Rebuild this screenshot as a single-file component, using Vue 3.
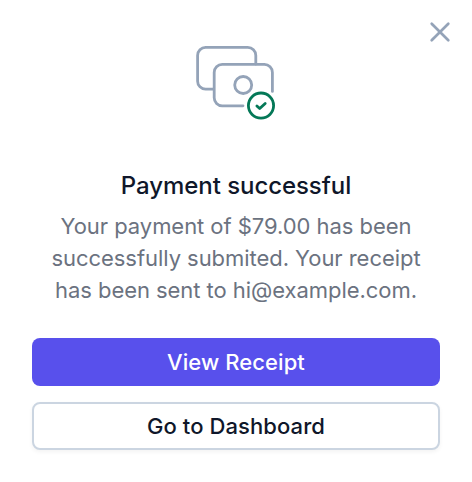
<script setup>
const lines = [
  'Your payment of $79.00 has been',
  'successfully submited. Your receipt',
  'has been sent to hi@example.com.',
]
</script>

<template>
  <main class="dialog" role="dialog" aria-labelledby="dialog-title">
    <button class="close" aria-label="Close">
      <svg width="24" height="24" viewBox="0 0 24 24" fill="none">
        <path d="M3.7 3.7 20.3 20.3M20.3 3.7 3.7 20.3" stroke="#94a3b8" stroke-width="2.7" stroke-linecap="round" />
      </svg>
    </button>
    <svg class="art" width="80" height="80" viewBox="0 0 80 80" fill="none" stroke="#94a3b8" stroke-width="2.8" stroke-linecap="round" stroke-linejoin="round">
      <path d="M17 49.2H9.6a8 8 0 0 1-8-8V15.4a8 8 0 0 1 8-8h42.2a8 8 0 0 1 8 8V24" />
      <path d="M47 65.8H26.2a8 8 0 0 1-8-8V32.4a8 8 0 0 1 8-8h42.2a8 8 0 0 1 8 8V51.4" />
      <circle cx="47.2" cy="45" r="8.5" />
      <g stroke="#047857">
        <circle cx="65" cy="65.6" r="12.6" />
        <path d="m60.9 65.9 2.8 2.7 5.5-5.2" />
      </g>
    </svg>
    <h1 id="dialog-title" class="title">Payment successful</h1>
    <p class="message">
      <span v-for="line in lines" :key="line" class="line">{{ line }}</span>
    </p>
    <div class="actions">
      <button class="button primary">View Receipt</button>
      <button class="button secondary">Go to Dashboard</button>
    </div>
  </main>
</template>

<style>
body {
  background: #fff;
}
</style>

<style scoped>
.dialog {
  position: relative;
  box-sizing: border-box;
  width: 472px;
  height: 482px;
  padding: 40px 32px 32px;
  display: flex;
  flex-direction: column;
  align-items: center;
  background: #fff;
  font-family: Inter, "Liberation Sans", sans-serif;
}
.close {
  position: absolute;
  top: 20px;
  right: 20px;
  padding: 0;
  border: 0;
  background: none;
  line-height: 0;
}
.art {
  display: block;
}
.title {
  margin: 50px 0 0;
  font-size: 24px;
  line-height: 32px;
  font-weight: 500;
  letter-spacing: -0.06px;
  color: #0f172a;
}
.message {
  margin: 8px 0 0;
  font-size: 22px;
  line-height: 32px;
  letter-spacing: -0.05px;
  color: #6b7280;
  text-align: center;
}
.line {
  display: block;
  white-space: nowrap;
}
.actions {
  align-self: stretch;
  display: flex;
  flex-direction: column;
  gap: 16px;
  margin-top: 32px;
}
.button {
  box-sizing: border-box;
  height: 48px;
  padding: 0;
  border-radius: 8px;
  font-family: inherit;
  font-size: 22px;
  letter-spacing: 0.08px;
  line-height: 32px;
  font-weight: 500;
}
.primary {
  border: 0;
  background: #5850ec;
  color: #fff;
}
.secondary {
  border: 2px solid #cbd5e1;
  background: #fff;
  color: #0f172a;
  box-shadow: 0 2px 4px rgba(0, 0, 0, 0.05);
}
</style>
